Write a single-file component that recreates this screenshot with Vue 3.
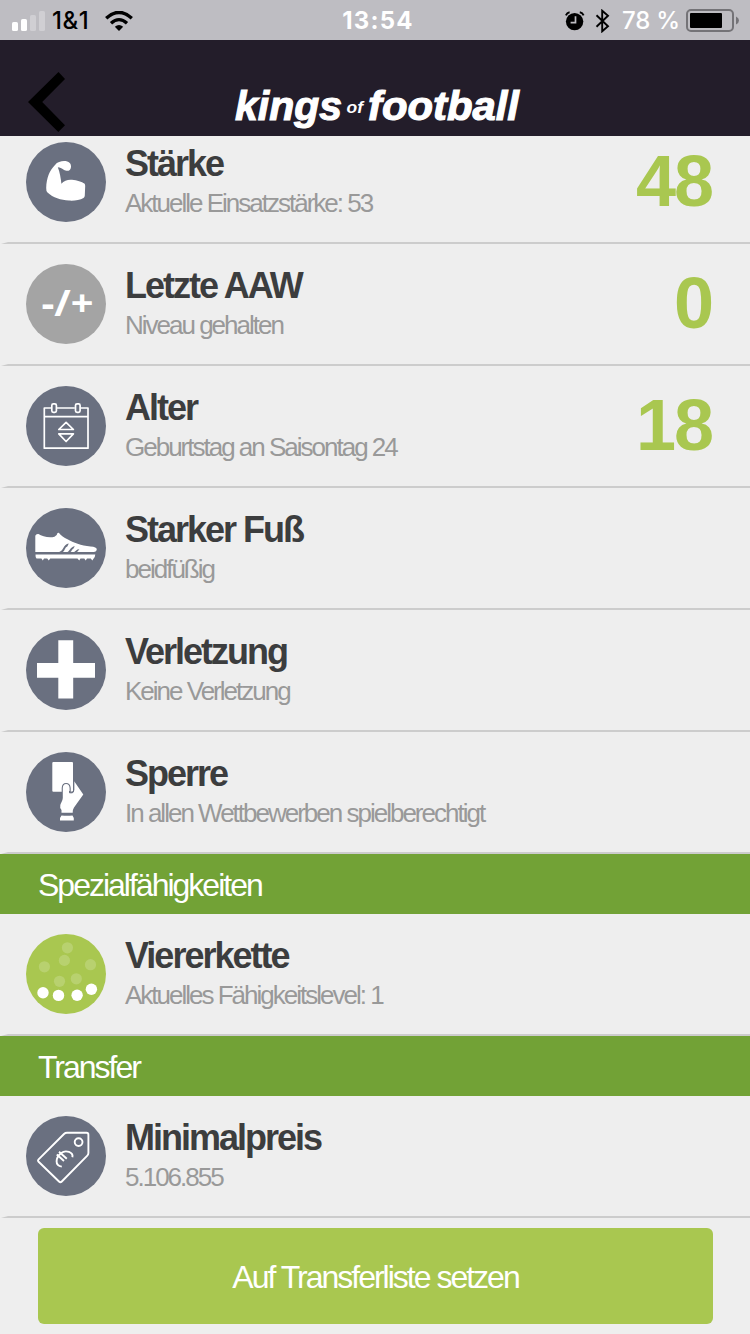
<script setup>
const groups = [
  {
    heading: '',
    rows: [
      { icon: 'arm', title: 'Stärke', note: 'Aktuelle Einsatzstärke: 53', value: '48' },
      { icon: 'trend', title: 'Letzte AAW', note: 'Niveau gehalten', value: '0' },
      { icon: 'calendar', title: 'Alter', note: 'Geburtstag an Saisontag 24', value: '18' },
      { icon: 'shoe', title: 'Starker Fuß', note: 'beidfüßig' },
      { icon: 'cross', title: 'Verletzung', note: 'Keine Verletzung' },
      { icon: 'card', title: 'Sperre', note: 'In allen Wettbewerben spielberechtigt' },
    ],
  },
  {
    heading: 'Spezialfähigkeiten',
    rows: [{ icon: 'chain', title: 'Viererkette', note: 'Aktuelles Fähigkeitslevel: 1' }],
  },
  {
    heading: 'Transfer',
    rows: [{ icon: 'tag', title: 'Minimalpreis', note: '5.106.855' }],
  },
]
const faintDots = [[41.4, 13.8], [38.4, 26.4], [18.4, 32.8], [64.5, 30.7], [33.5, 47.3], [50.3, 44.8]]
const brightDots = [[17, 58.8], [32.5, 61.4], [51.1, 61.2], [65.4, 55.2]]
</script>

<template>
  <div class="screen">
    <div class="status">
      <div class="side">
        <svg class="bars" width="34" height="20" viewBox="0 0 34 20">
          <rect x="0" y="11" width="6" height="9" rx="1.6" fill="#fff" />
          <rect x="9" y="8" width="6" height="12" rx="1.6" fill="#fff" />
          <rect x="18" y="4" width="6" height="16" rx="1.6" fill="#d0cfd3" />
          <rect x="27" y="0" width="6" height="20" rx="1.6" fill="#d0cfd3" />
        </svg>
        <span class="carrier">1&amp;1</span>
        <svg class="wifi" width="28" height="20" viewBox="0 0 28 20">
          <path d="M1.2 7.2Q14-4.4 26.8 7.2" fill="none" stroke="#000" stroke-width="3.4" />
          <path d="M6 12.2Q14 5 22 12.2" fill="none" stroke="#000" stroke-width="3.3" />
          <path d="M9.8 15.8Q14 12.2 18.2 15.8L14 20Z" />
        </svg>
      </div>
      <span class="clock">13:54</span>
      <div class="side end">
        <svg class="alarm" width="20" height="20" viewBox="0 0 20 20">
          <circle cx="9.6" cy="10.6" r="8.7" />
          <path d="M.9 4.3Q2 1.6 4.6 1.2M14.8 1.2Q17.6 1.7 18.6 4.3" fill="none" stroke="#000" stroke-width="1.9" />
          <path d="M10.5 5.3V11.6H5.6" fill="none" stroke="#bebdc2" stroke-width="1.7" />
        </svg>
        <svg class="bluetooth" width="16" height="24" viewBox="0 0 16 24">
          <path d="M1.5 6.2L13 17.2L7.2 22.3V1.7L13 6.8L1.5 17.8" fill="none" stroke="#000" stroke-width="1.9" />
        </svg>
        <span class="percent">78 %</span>
        <svg class="battery" width="54" height="24" viewBox="0 0 54 24">
          <rect x="1" y="1" width="46" height="21" rx="4" fill="none" stroke="#747377" stroke-width="2" />
          <rect x="4" y="4" width="32" height="15" rx="1" />
          <path d="M50 7.5Q53 9 53 11.5T50 15.5Z" fill="#747377" />
        </svg>
      </div>
    </div>

    <header class="header">
      <svg class="back" width="38" height="60" viewBox="0 0 38 60">
        <path d="M30.5 0L37 7L14.2 30L37 53.3L30.3 60L0 30Z" />
      </svg>
      <svg class="logo" width="300" height="56" viewBox="0 0 300 56">
        <text class="brand" x="9" y="40.5" textLength="107" lengthAdjust="spacingAndGlyphs">kings</text>
        <text class="of" x="120.5" y="33.5" textLength="16.5" lengthAdjust="spacingAndGlyphs">of</text>
        <text class="brand" x="142" y="41" textLength="151" lengthAdjust="spacingAndGlyphs">football</text>
      </svg>
    </header>

    <main class="content">
      <section v-for="group in groups" :key="group.heading">
        <h2 v-if="group.heading" class="heading">{{ group.heading }}</h2>
        <div v-for="row in group.rows" :key="row.title" class="row">
          <svg class="icon" :class="row.icon" width="80" height="80" viewBox="0 0 80 80">
            <path v-if="row.icon === 'arm'" fill="#fff" d="M29 23C31 20 35 19 38 19C43 19 45.3 21.5 45 25C44.7 28.5 42 29.5 39.5 28.5C37.5 28 36.5 26 31.8 25.2C33.8 30 34.8 36 35.4 41.8C38 38.5 42 37.4 46 37.8C51 38.3 56 40 58.4 41.5Q59.2 42.3 59.2 44L58.8 53.5Q58.7 55.2 57.5 56C54 58.2 48 58.9 43 58.6C35 58 27 56 21.5 50.6Q20 49 20.2 46C20.5 36 23.5 28.5 29 23Z" />
            <text v-else-if="row.icon === 'trend'" class="sign" x="15.5" y="52.3" textLength="52" lengthAdjust="spacingAndGlyphs">-/+</text>
            <g v-else-if="row.icon === 'calendar'" fill="none" stroke="#fff" stroke-width="1.7" stroke-linejoin="round">
              <path d="M25.4 22H18.3V62.2H62V22H54.8M30.6 22H48.8M18.3 30.7H62" />
              <rect x="25.8" y="17.8" width="4.6" height="8.5" rx="1.6" />
              <rect x="49.5" y="17.8" width="4.6" height="8.5" rx="1.6" />
              <path d="M40.1 36.3L47.4 43.5H32.8ZM32.8 47.8H47.4L40.1 55.5Z" />
            </g>
            <g v-else-if="row.icon === 'shoe'" fill="#fff">
              <path d="M9.3 44V27.8Q10 25.6 12.5 26C16 28.5 23 30.2 28.5 28.8Q31 27.8 31.5 24.9L32.8 24.8C35 27.8 38 29.6 41.5 31.3C47.5 34.8 55 37.7 64.5 38.5Q70.8 38.8 70.8 41.5Q70.7 43.6 68 44Z" />
              <path d="M9.5 46.5H69.3Q69 50.2 67.3 51L66.3 52.6L64.8 50.6H61L59.7 52.6L58.3 50.6H54.5L53.2 52.6L51.5 50.6H24.2L22.8 52.6L21.2 50.6H18L16.8 52.6L15.4 50.6H10.5Q9.3 49 9.5 46.5Z" />
              <path d="M33.2 44C37.3 43.2 37.3 36.5 42.8 35.6L41.3 38.6C38.8 39.3 38.7 43.5 36.8 44ZM41.5 44C44 42.5 44.5 38.8 48.8 38.2L47.3 40.7C45.5 41.4 45.8 43.6 44.3 44ZM48.2 44C49.6 43.3 50.3 41.4 53.4 41.3L52 43.1L51 44Z" fill="#6a7080" />
            </g>
            <path v-else-if="row.icon === 'cross'" fill="#fff" d="M32.3 10.3H47.2V33H69V47.8H47.2V68.4H32.3V47.8H11V33H32.3Z" />
            <g v-else-if="row.icon === 'card'" fill="#fff">
              <rect x="26.3" y="10" width="20.7" height="29.8" rx="1" />
              <path d="M36.8 41V36Q37 32 40.1 32Q43.3 32 43.6 36V40.8H46.5Q48.2 40.6 48.2 38V29.3L57.3 42.5L48 55.5Q46.6 57.5 46.7 60.8H35.5V58Q33.6 56 34.3 53C34.8 50.7 36.7 49.2 36.8 46Z" stroke="#6a7080" stroke-width="2.2" paint-order="stroke" />
              <path d="M43.5 39V40.8H46.2Q47.7 40.6 47.7 38V27" fill="none" stroke="#6a7080" stroke-width="1" />
              <path d="M35.5 63.4Q41 64.3 46.5 63.4Q48 65 47.8 68.4H34Q33.8 65 35.5 63.4Z" />
            </g>
            <g v-else-if="row.icon === 'chain'" fill="#fff">
              <circle v-for="(d, i) in faintDots" :key="'f' + i" :cx="d[0]" :cy="d[1]" r="5.6" fill-opacity="0.18" />
              <circle v-for="(d, i) in brightDots" :key="'b' + i" :cx="d[0]" :cy="d[1]" r="5.7" />
            </g>
            <g v-else fill="none" stroke="#fff" stroke-width="1.9" stroke-linejoin="round">
              <path d="M41 16.8H60.5Q62.4 16.8 62.4 18.7V37Q62.4 38.6 61.3 39.7L35.8 65.5Q34.4 66.9 33 65.5L12.6 45.8Q11.4 44.6 12.6 43.4L38 18Q39.3 16.8 41 16.8Z" />
              <circle cx="52.6" cy="26.1" r="3.9" />
              <path d="M46.4 41.3C47.5 36.5 40 33.2 35 37.2C29.5 41.7 28.5 49.8 35.8 50.6M33 35.8L40.8 42.8M30.8 38.5L38 45" />
            </g>
          </svg>
          <div class="text">
            <div class="title">{{ row.title }}</div>
            <div class="note">{{ row.note }}</div>
          </div>
          <div v-if="row.value" class="value">{{ row.value }}</div>
        </div>
      </section>
      <button class="action">Auf Transferliste setzen</button>
    </main>
  </div>
</template>

<style>
body {
  margin: 0;
  background: #eee;
}
</style>

<style scoped>
.screen {
  width: 750px;
  height: 1334px;
  overflow: hidden;
  background: #eee;
  font-family: "Liberation Sans", Arial, sans-serif;
}
.status {
  display: grid;
  grid-template-columns: 1fr auto 1fr;
  align-items: center;
  height: 40px;
  background: #bebdc2;
  font-family: Inter, "Liberation Sans", sans-serif;
  font-size: 24px;
  line-height: 42px;
}
.side {
  display: flex;
  align-items: center;
  height: 40px;
  padding-left: 12px;
}
.end {
  justify-content: flex-end;
  padding: 0 10px 0 0;
}
.carrier {
  width: 39px;
  margin: 0 14px 0 6px;
  font-weight: 500;
  letter-spacing: 0.6px;
  white-space: nowrap;
}
.clock {
  padding-left: 6px;
  color: #fff;
  font-weight: 700;
  letter-spacing: 1.2px;
}
.alarm {
  margin-right: 10px;
}
.bluetooth {
  margin-right: 11px;
}
.percent {
  margin-right: 6px;
  color: #fff;
  font-weight: 500;
  letter-spacing: -0.2px;
  white-space: nowrap;
}
.header {
  display: flex;
  align-items: flex-start;
  box-sizing: border-box;
  height: 96px;
  padding: 32px 28px 0;
  background: #231d2a;
}
.logo {
  margin: 7px 0 0 160px;
}
.brand {
  fill: #fff;
  stroke: #fff;
  stroke-width: 1.1px;
  font-size: 40px;
  font-weight: 700;
  font-style: italic;
}
.of {
  fill: #fff;
  font-size: 17px;
  font-weight: 700;
  font-style: italic;
}
.content {
  margin-top: -14px;
}
.row {
  position: relative;
  display: flex;
  box-sizing: border-box;
  height: 122px;
  padding: 20px 37px 0 26px;
}
.row:first-child {
  clip-path: inset(0);
}
section:first-child .row:first-child {
  clip-path: inset(14px 0 0);
}
.row::after {
  content: "";
  position: absolute;
  left: 0;
  right: 0;
  bottom: 0;
  height: 2px;
  background: #ccc;
  clip-path: polygon(8px 0, 100% 0, 100% 100%, 1px 100%);
}
.icon {
  flex: none;
  border-radius: 50%;
  background: #6a7080;
}
.icon.trend {
  background: #a4a4a4;
}
.icon.chain {
  background: #a9c750;
}
.sign {
  fill: #fff;
  font: 700 36px "Open Sans", sans-serif;
}
.text {
  flex: 1;
  padding: 2px 0 0 19px;
  white-space: nowrap;
}
.title {
  color: #3c3d3e;
  font-size: 36px;
  font-weight: 700;
  line-height: 40px;
  letter-spacing: -2px;
}
.note {
  margin-top: 1px;
  color: #999;
  font-size: 26px;
  line-height: 36px;
  letter-spacing: -2px;
}
.value {
  margin: -20px 1px 0 0;
  color: #a9c750;
  font-size: 72px;
  font-weight: 700;
  line-height: 118px;
  letter-spacing: -2px;
}
.heading {
  height: 60px;
  margin: 0;
  padding-left: 38px;
  background: #72a236;
  color: #fff;
  font-size: 32px;
  font-weight: 400;
  line-height: 63px;
  letter-spacing: -2px;
}
.action {
  display: block;
  width: 675px;
  height: 96px;
  margin: 10px 0 0 38px;
  padding: 2px 0 0;
  border: 0;
  border-radius: 6px;
  background: #a9c750;
  color: #fff;
  font: 32px "Liberation Sans", Arial, sans-serif;
  letter-spacing: -2px;
}
</style>
